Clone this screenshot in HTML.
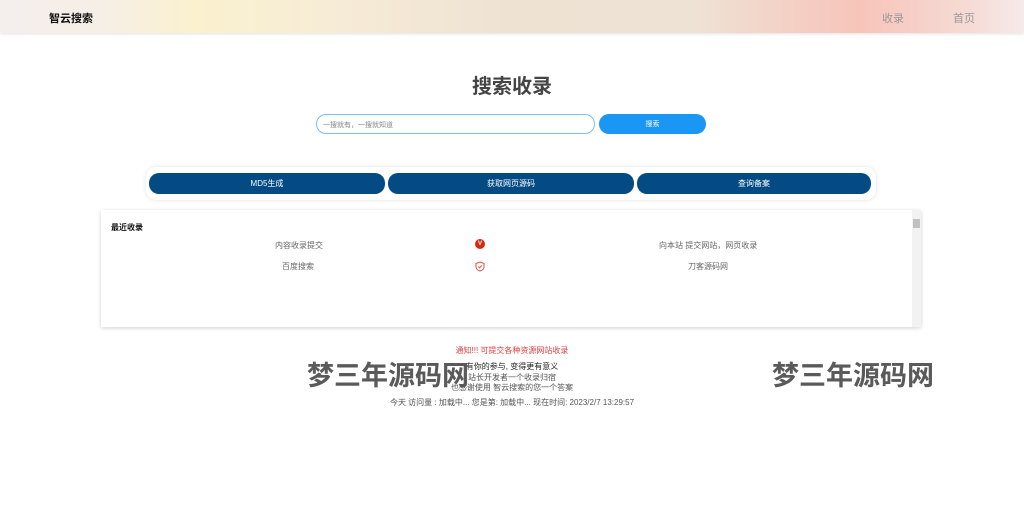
<!DOCTYPE html>
<html><head><meta charset="utf-8"><style>
*{margin:0;padding:0;box-sizing:border-box}
body{width:1024px;height:531px;background:#fff;font-family:"Liberation Sans","Noto Sans CJK SC",sans-serif;position:relative;overflow:hidden;color:#333}
.hdr{position:absolute;left:0;top:0;width:1024px;height:33px;background:linear-gradient(90deg,#f4eeed 0%,#f6efe6 10%,#faf1cf 19%,#f7ecd6 32%,#eee2d3 50%,#eee2d4 68%,#f4cfc4 78%,#f7c4ba 84%,#f6dcd6 95%,#f6eaea 100%);box-shadow:0 1px 3px rgba(0,0,0,.12)}
.logo{position:absolute;left:49px;top:10px;font-size:11px;font-weight:bold;color:#111}
.nav{position:absolute;top:10px;font-size:11px;color:#999}
h1{position:absolute;left:0;width:1024px;top:70px;text-align:center;font-size:20px;font-weight:bold;color:#444}
.inp{position:absolute;left:316px;top:114px;width:279px;height:20px;border:1px solid #7cc0f4;border-radius:10px;font-size:7px;color:#888;padding:5px 6px}
.btn{position:absolute;left:599px;top:114px;width:107px;height:20px;background:#1a96f5;border-radius:10px;color:#fff;font-size:7px;text-align:center;line-height:22px}
.tools{position:absolute;left:146px;top:167px;width:730px;height:33px;background:#fff;border-radius:10px;box-shadow:0 0 4px rgba(0,0,0,.12)}
.tb{position:absolute;top:6px;height:21px;background:#044b83;border-radius:10px;color:#fff;font-size:8px;text-align:center;line-height:21px}
.box{position:absolute;left:101px;top:210px;width:820px;height:117px;background:#fff;box-shadow:0 1px 4px rgba(0,0,0,.18)}
.sb{position:absolute;right:0;top:0;width:9px;height:117px;background:#f2f2f2}
.t{position:absolute;font-size:8px;color:#666;white-space:nowrap}
.wm{position:absolute;font-size:27px;font-weight:bold;color:#5a5a5a;top:354px;letter-spacing:0}
.c{position:absolute;left:0;width:1024px;text-align:center;font-size:8px}
</style></head><body>
<div class="hdr"><div class="logo">智云搜索</div><div class="nav" style="left:882px">收录</div><div class="nav" style="left:953px">首页</div></div>
<h1>搜索收录</h1>
<div class="inp">一搜就有，一搜就知道</div>
<div class="btn">搜索</div>
<div class="tools">
<div class="tb" style="left:3px;width:236px">MD5生成</div>
<div class="tb" style="left:242px;width:246px">获取网页源码</div>
<div class="tb" style="left:491px;width:234px">查询备案</div>
</div>
<div class="box">
<div class="t" style="left:10px;top:12px;color:#111;font-weight:bold">最近收录</div>
<div class="t" style="left:174px;top:30px">内容收录提交</div>
<div style="position:absolute;left:374px;top:29px;width:10px;height:10px;border-radius:50%;background:#d8290f;color:#fff;font-size:6px;font-weight:bold;text-align:center;line-height:10px">V</div>
<div class="t" style="left:558px;top:30px">向本站 提交网站，网页收录</div>
<div class="t" style="left:181px;top:51px">百度搜索</div>
<svg style="position:absolute;left:374px;top:51px" width="10" height="11" viewBox="0 0 10 11"><path d="M5 1L9 2.5V6C9 8 7 9.5 5 10C3 9.5 1 8 1 6V2.5Z" fill="none" stroke="#e0503a" stroke-width="1"/><path d="M3.3 5.6L4.6 6.8L6.8 4.5" fill="none" stroke="#e0503a" stroke-width="1"/></svg>
<div class="t" style="left:587px;top:51px">刀客源码网</div>
<div class="sb"><div style="position:absolute;left:1px;top:9px;width:7px;height:9px;background:#c1c1c1"></div></div>
</div>
<div class="c" style="top:345px;color:#e04040">通知!!! 可提交各种资源网站收录</div>
<div class="c" style="top:361px;color:#222">有你的参与, 变得更有意义</div>
<div class="c" style="top:372px;color:#555">站长开发者一个收录归宿</div>
<div class="c" style="top:382px;color:#555">也感谢使用 智云搜索的您一个答案</div>
<div class="c" style="top:397px;color:#555">今天 访问量 : 加载中... 您是第: 加载中... 现在时间: 2023/2/7 13:29:57</div>
<div class="wm" style="left:307px">梦三年源码网</div>
<div class="wm" style="left:772px">梦三年源码网</div>
</body></html>
